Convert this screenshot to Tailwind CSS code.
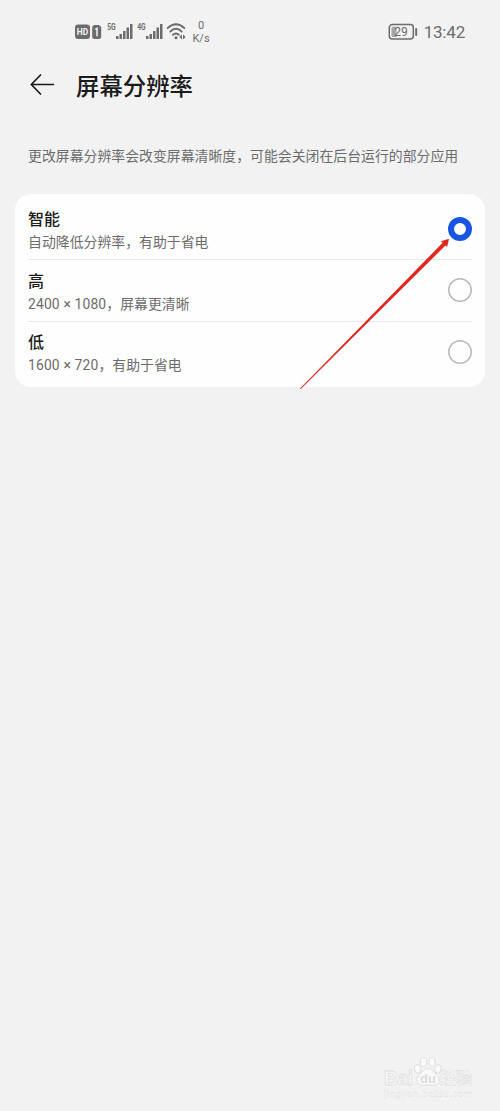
<!DOCTYPE html>
<html lang="zh-CN">
<head>
<meta charset="utf-8">
<meta name="viewport" content="width=device-width, initial-scale=1">
<title>屏幕分辨率</title>
<script src="https://cdn.jsdelivr.net/npm/@tailwindcss/browser@4"></script>
</head>
<body class="bg-[#f2f2f3]">
<div class="relative flex h-[1111px] w-[500px] flex-col overflow-hidden bg-[#f2f2f3] font-[Roboto,'Noto_Sans_CJK_SC',sans-serif] text-[#6c6c6d]">
  <header class="flex h-[60px] justify-between pt-[18px] pr-[35px] pl-[74px] text-[#6b6c6e]">
    <div class="flex h-7">
      <svg class="h-7 w-[115px]" viewBox="0 0 115 28" fill="currentColor">
        <rect x="1" y="6.500" width="15" height="14.500" rx="3"/>
        <path d="M20.500 7h4.500l2.200 2v9.500a2.500 2.500 0 0 1-2.500 2.500h-4a2.500 2.500 0 0 1-2.500-2.500v-9a2.500 2.500 0 0 1 2.300-2.500z"/>
        <path d="M21.300 11.300l1.700-1v8" fill="none" stroke="#f2f2f3" stroke-width="1.500"/>
        <text x="8.500" y="17.300" text-anchor="middle" font-size="9.500" font-weight="700" textLength="11.500" lengthAdjust="spacingAndGlyphs" fill="#f2f2f3">HD</text>
        <text x="33.200" y="12.300" font-size="8.500" font-weight="700" textLength="8.500" lengthAdjust="spacingAndGlyphs">5G</text>
        <path d="M42 18h2.500v3H42zM45.500 16h2.500v5h-2.500zM49 13h2.500v8H49zM52.500 9.500h2.500V21h-2.500zM56 6h2.500v15H56z"/>
        <text x="63.200" y="12.300" font-size="8.500" font-weight="700" textLength="8.500" lengthAdjust="spacingAndGlyphs">4G</text>
        <path d="M72 18h2.500v3H72zM75.500 16h2.500v5h-2.500zM79 13h2.500v8H79zM82.500 9.500h2.500V21h-2.500zM86 6h2.500v15H86z"/>
        <path d="M93.700 10q8.300-7.500 16.600 0M96.400 13.500q5.600-5.300 11.200 0M99 16.800q3-2.600 5.800 0" fill="none" stroke="currentColor" stroke-width="1.900" stroke-linecap="round"/>
        <circle cx="102" cy="19.700" r="1.500"/>
        <path d="M108 16.500v5l-2.700-2.500zM109 16.500v5l2.700-2.500z"/>
      </svg>
      <div class="flex w-6 flex-col items-center pt-[1px] text-[11px] leading-[13px]"><span>0</span><span>K/s</span></div>
    </div>
    <div class="flex h-7 items-center gap-[5px]">
      <svg class="h-7 w-[31px]" viewBox="0 0 31 28">
        <rect x="1.300" y="6.600" width="24" height="14.400" rx="3" fill="none" stroke="currentColor" stroke-width="1.500"/>
        <path d="M5 8.700h3.500v10.200H5a1.500 1.500 0 0 1-1.500-1.500v-7.200A1.500 1.500 0 0 1 5 8.700z" fill="#a5a6a8"/>
        <path d="M28.200 11v6" stroke="currentColor" stroke-width="2" stroke-linecap="round"/>
        <text x="12.900" y="18.200" text-anchor="middle" font-size="12" textLength="13.500" lengthAdjust="spacingAndGlyphs" fill="currentColor">29</text>
      </svg>
      <span class="text-[17px] leading-7 tracking-[-.2px] whitespace-nowrap">13:42</span>
    </div>
  </header>

  <div class="flex h-[50px] items-center gap-[20px] pl-[29px] text-[#1b1b1b]">
    <svg class="h-[26px] w-[27px]" viewBox="0 0 27 26" fill="none" stroke="currentColor" stroke-width="1.700" stroke-linecap="round" stroke-linejoin="round"><path d="M24.500 12.500H2.300M11.500 3L2.300 12.500l9.200 9.500"/></svg>
    <h1 class="pt-[4px] text-[23.400px] leading-[30px] font-medium whitespace-nowrap">屏幕分辨率</h1>
  </div>

  <p class="mt-[36px] h-[20px] pl-[28px] text-[13.880px] leading-5 whitespace-nowrap">更改屏幕分辨率会改变屏幕清晰度，可能会关闭在后台运行的部分应用</p>

  <main class="mx-[15px] mt-[28px] flex h-[193px] flex-col rounded-[16px] bg-[#fefefe] px-[13px] text-[13.880px]">
    <section class="flex h-[66px] items-center justify-between border-b border-[#e9e9ea] pt-[4px]">
      <div class="pt-[3px]"><h2 class="text-[16px] leading-[23px] font-medium text-[#1b1b1b]">智能</h2><p class="leading-[22px]">自动降低分辨率，有助于省电</p></div>
      <span class="size-6 rounded-full border-[6px] border-[#1656e0] bg-white"></span>
    </section>
    <section class="flex h-[62px] items-center justify-between border-b border-[#e9e9ea] pb-[1px]">
      <div class="pt-[4px]"><h2 class="text-[16px] leading-[23px] font-medium text-[#1b1b1b]">高</h2><p class="leading-[22px]"><span class="tracking-[.150px]">2400 × 1080</span>，屏幕更清晰</p></div>
      <svg class="size-6" viewBox="0 0 24 24"><circle cx="12" cy="12" r="11.200" fill="none" stroke="#b9b9bb" stroke-width="1.500"/></svg>
    </section>
    <section class="flex h-[61px] items-center justify-between pb-[2px]">
      <div class="pt-[4px]"><h2 class="text-[16px] leading-[23px] font-medium text-[#1b1b1b]">低</h2><p class="leading-[22px]"><span class="tracking-[.150px]">1600 × 720</span>，有助于省电</p></div>
      <svg class="size-6" viewBox="0 0 24 24"><circle cx="12" cy="12" r="11.200" fill="none" stroke="#b9b9bb" stroke-width="1.500"/></svg>
    </section>
  </main>

  <svg class="pointer-events-none absolute top-[235px] left-[298px] h-[156px] w-[154px]" viewBox="298 235 154 156">
    <path d="M300 388.500L442.600 242.800l-1.600-1.500L449 238.800l-1.900 8.200-1.600-1.500L300.800 389z" fill="#e0281f"/>
  </svg>

  <svg class="absolute top-[1050px] left-[380px] h-[55px] w-[100px]" viewBox="0 0 100 55" fill="#f9f9f9" stroke="#dedede" stroke-width="1">
    <g font-weight="700">
      <text x="4" y="35" font-family="Liberation Sans" font-size="20" textLength="29" lengthAdjust="spacingAndGlyphs" stroke-width=".8">Bai</text>
      <text x="60" y="34" font-size="16" textLength="32" font-family="Noto Sans CJK SC" stroke-width=".6">经验</text>
      <text x="4" y="47" font-family="Liberation Sans" font-size="9.500" font-weight="400" textLength="88" stroke-width=".3">jingyan.baidu.com</text>
    </g>
    <ellipse cx="37.500" cy="19" rx="3" ry="4.200" transform="rotate(-15 37.500 19)"/>
    <ellipse cx="43.500" cy="12" rx="3.200" ry="4.500"/>
    <ellipse cx="52" cy="12" rx="3.200" ry="4.500"/>
    <ellipse cx="58" cy="19" rx="3" ry="4.200" transform="rotate(15 58 19)"/>
    <path d="M48 18.500c4 0 5.500 3 8 5.500 3 3 4 5.500 2.500 8.500-2 4-6.500 2.500-10.500 2.500s-8.500 1.500-10.500-2.500c-1.500-3-.5-5.500 2.500-8.500 2.500-2.500 4-5.500 8-5.500z"/>
    <text x="48" y="33" text-anchor="middle" font-family="Liberation Sans" font-size="13" font-weight="700" fill="#dcdcdc" stroke="none">du</text>
  </svg>
</div>
</body>
</html>
